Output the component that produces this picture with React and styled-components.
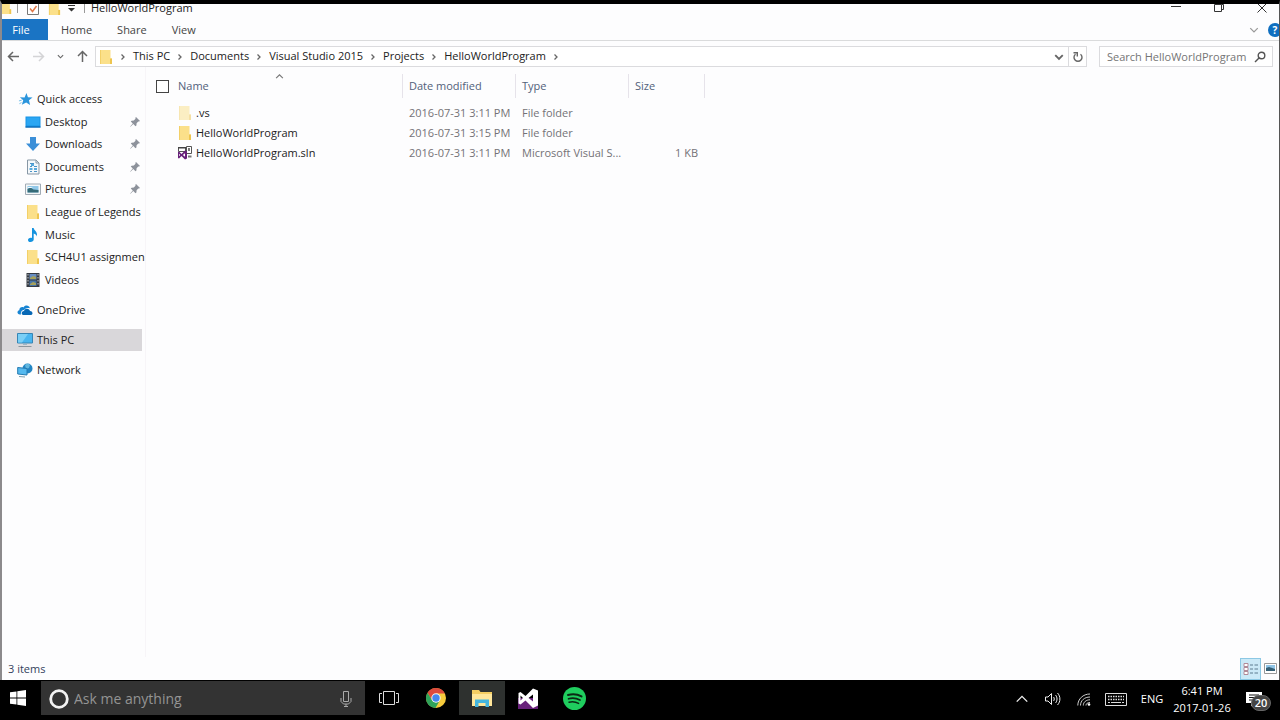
import React from 'react'
import styled, { createGlobalStyle } from 'styled-components'

const GlobalStyle = createGlobalStyle`
    * {
        box-sizing: border-box;
    }
    body {
        margin: 0;
        background: #000;
        font-family: "Open Sans", "Noto Sans", sans-serif;
        font-size: 11px;
        line-height: 16px;
        color: #222;
    }
    button, input {
        font: inherit;
        color: inherit;
        border: 0;
        padding: 0;
        background: none;
        border-radius: 0;
        outline: none;
    }
    a {
        color: inherit;
        text-decoration: none;
    }
    svg {
        display: block;
        flex: none;
    }
`

const Desktop = styled.div`
    min-height: 100vh;
    display: flex;
    flex-direction: column;
`

const Window = styled.div`
    flex: 1;
    display: flex;
    flex-direction: column;
    background: #fdfdfe;
    border-top: 4px solid #000;
    border-left: 2px solid #8c8a8c;
    border-right: 1px solid #555;
`

const TitleBar = styled.header`
    height: 15px;
    overflow: hidden;
    display: flex;
    justify-content: space-between;
    align-items: flex-start;
`

const TitleGroup = styled.div`
    height: 8px;
    display: flex;
    align-items: center;
`

const QuickButton = styled.button`
    width: ${props => props.$width || 14}px;
    display: flex;
    justify-content: center;
`

const TitleDivider = styled.span`
    width: 1px;
    height: 10px;
    margin: 0 6px 0 8px;
    background: #999;
`

const Title = styled.h1`
    margin: 0;
    font-size: 11px;
    line-height: 8px;
    font-weight: normal;
`

const WindowButton = styled.button`
    width: 43px;
    display: flex;
    justify-content: center;
`

const WindowButtons = styled(TitleGroup)`
    margin-right: -4px;
`

const Ribbon = styled.nav`
    height: 22px;
    display: flex;
    align-items: center;
    border-bottom: 1px solid #dadbdc;
`

const FileTab = styled.button`
    width: 46px;
    height: 21px;
    margin-right: 1px;
    padding-right: 8px;
    background: #1a74c4;
    color: #fff;
`

const Tab = styled.button`
    height: 21px;
    padding: 0 12px;
    margin-right: 1px;
    color: #444;
`

const RibbonEnd = styled.div`
    margin-left: auto;
    display: flex;
    align-items: center;
    gap: 9px;
    overflow: hidden;
`

const HelpButton = styled.button`
    width: 14px;
    height: 14px;
    margin-right: -3px;
    border-radius: 50%;
    background: #0f6fc0;
    color: #fff;
    font-size: 10px;
    font-weight: bold;
    line-height: 14px;
`

const AddressRow = styled.div`
    display: flex;
    padding: 5px 6px 0 0;
`

const NavButtons = styled.div`
    width: 93px;
    display: flex;
    align-items: center;
    justify-content: space-between;
    padding: 0 6px 0 5px;
`

const NavButton = styled.button`
    display: flex;
`

const AddressBar = styled.nav`
    flex: 1;
    height: 21px;
    display: flex;
    align-items: center;
    border: 1px solid #dbdbde;
    padding-left: 3px;
    background: #fff;
`

const Crumb = styled.a`
    padding-bottom: 2px;
    white-space: nowrap;
`

const CrumbArrow = styled.span`
    width: 20px;
    display: flex;
    justify-content: center;
`

const AddressButton = styled.button`
    width: 18px;
    height: 19px;
    display: flex;
    align-items: center;
    justify-content: center;
    border-left: ${props => (props.$line ? '1px solid #dbdbde' : '0')};
    margin-left: ${props => (props.$push ? 'auto' : '0')};
`

const SearchBox = styled.label`
    width: 174px;
    height: 21px;
    margin-left: 12px;
    display: flex;
    align-items: center;
    border: 1px solid #dbdbde;
    padding: 0 6px 0 7px;
    background: #fff;
`

const SearchInput = styled.input`
    flex: 1;
    min-width: 0;
    &::placeholder {
        color: #757575;
        opacity: 1;
    }
`

const Body = styled.div`
    flex: 1;
    display: flex;
`

const Sidebar = styled.nav`
    width: 144px;
    padding-top: 21px;
    border-right: 1px solid #f7f5f8;
`

const PlaceList = styled.ul`
    list-style: none;
    margin: 0;
    padding: 0;
    height: 203px;
    display: grid;
    grid-auto-rows: 1fr;
`

const RootList = styled.ul`
    list-style: none;
    margin: 0;
    padding: 8px 0 0;
    display: grid;
    grid-auto-rows: 22px;
    gap: 8px;
`

const Place = styled.a`
    height: 100%;
    width: 140px;
    display: flex;
    align-items: center;
    gap: 4px;
    padding-left: ${props => (props.$nested ? 23 : 15)}px;
    padding-right: 2px;
    background: ${props => (props.$active ? '#d9d7da' : 'transparent')};
    white-space: nowrap;
`

const PlaceName = styled.span`
    flex: 1;
`

const Main = styled.main`
    flex: 1;
    padding: 7px 0 0 4px;
`

const FileTable = styled.table`
    width: 555px;
    table-layout: fixed;
    border-collapse: collapse;
`

const HeadCell = styled.th`
    padding: 0 0 5px;
    text-align: left;
    font-weight: normal;
    color: #52617a;
`

const HeadInner = styled.div`
    position: relative;
    height: 24px;
    display: flex;
    align-items: center;
    padding-left: ${props => (props.$flush ? 0 : 6)}px;
    border-right: ${props => (props.$noLine ? '0' : '1px solid #e6e3ea')};
`

const SortMark = styled.span`
    position: absolute;
    top: -2px;
    left: 97px;
`

const Check = styled.input`
    appearance: none;
    width: 13px;
    height: 13px;
    margin: 0 0 0 6px;
    border: 1px solid #444;
    background: #fff;
`

const Cell = styled.td`
    height: 20px;
    padding: 0 0 0 6px;
    color: #747276;
    white-space: nowrap;
`

const SizeCell = styled(Cell)`
    padding-right: 7px;
    text-align: right;
`

const NameCell = styled(Cell)`
    padding: 0;
    color: #222;
`

const FileLink = styled.a`
    display: flex;
    align-items: center;
    gap: 4px;
`

const StatusBar = styled.footer`
    height: 23px;
    display: flex;
    align-items: center;
    justify-content: space-between;
    padding-left: 6px;
    color: #33415c;
`

const ViewButtons = styled.div`
    display: flex;
    align-items: center;
`

const ViewButton = styled.button`
    width: ${props => (props.$active ? 21 : 18)}px;
    height: 22px;
    display: flex;
    align-items: center;
    justify-content: center;
    border: 1px solid ${props => (props.$active ? '#8cc8e4' : 'transparent')};
    background: ${props => (props.$active ? '#cbe9f7' : 'transparent')};
`

const Taskbar = styled.footer`
    height: 40px;
    padding: 1px 0 5px;
    display: flex;
    background: #000;
    color: #fff;
`

const StartButton = styled.button`
    width: 41px;
    display: flex;
    align-items: center;
    padding-left: 10px;
`

const Cortana = styled.label`
    width: 324px;
    display: flex;
    align-items: center;
    gap: 5px;
    padding: 2px 13px 0 8px;
    background: #333;
`

const CortanaInput = styled.input`
    flex: 1;
    min-width: 0;
    font-size: 14px;
    line-height: 20px;
    &::placeholder {
        color: #949494;
        opacity: 1;
    }
`

const TaskButton = styled.button`
    width: ${props => props.$width || 46}px;
    display: flex;
    align-items: center;
    justify-content: center;
    background: ${props => (props.$active ? '#2e312f' : 'transparent')};
`

const Tray = styled.div`
    margin-left: auto;
    display: flex;
    align-items: center;
    padding: 2px 9px 0 0;
`

const TrayButton = styled.button`
    width: ${props => props.$width || 31}px;
    display: flex;
    justify-content: center;
`

const Clock = styled.button`
    width: 62px;
    font-size: 11px;
    line-height: 17px;
    white-space: nowrap;
`

const Notifications = styled.button`
    position: relative;
    width: 38px;
    padding-left: 13px;
`

const Badge = styled.span`
    position: absolute;
    top: 4px;
    left: 18px;
    width: 20px;
    height: 16px;
    border-radius: 8px;
    background: #444;
    border: 1px solid #666;
    font-size: 11px;
    font-weight: 600;
    line-height: 14px;
`

const Folder = ({ pale, size = 14 }) => (
    <svg width={size} height={size + 2} viewBox="0 0 14 16" opacity={pale ? 0.5 : 1}>
        <path d="M1 1h10.5v8.500H13V15H1z" fill="#fbe08a" />
        <path d="M11 9.500h2V15h-2z" fill="#eec54f" />
        <path d="M1 1h1v14H1z" fill="#f3d068" />
    </svg>
)

const Arrow = ({ dir, color = '#666' }) => (
    <svg width="13" height="13" viewBox="0 0 13 13" fill="none" stroke={color} strokeWidth="1.500">
        {dir === 'left' && <path d="M12 6.500H1.500M6 2L1.500 6.500 6 11" />}
        {dir === 'right' && <path d="M1 6.500h10.500M7 2l4.500 4.500L7 11" />}
        {dir === 'up' && <path d="M6.500 12V1.500M2 6l4.500-4.500L11 6" />}
    </svg>
)

const Chevron = ({ dir = 'down', size = 8, color = '#666', weight = 1.3 }) => {
    const paths = {
        down: 'M1 2.500l3 3 3-3',
        up: 'M1 5.500l3-3 3 3',
        right: 'M2.500 1.500L5 4 2.500 6.500',
    }
    return (
        <svg width={size} height={size} viewBox="0 0 8 8" fill="none" stroke={color} strokeWidth={weight}>
            <path d={paths[dir]} />
        </svg>
    )
}

const Pin = () => (
    <svg width="10" height="10" viewBox="0 0 10 10">
        <path d="M6 0l4 4-1 .6-.7-.1L6.600 6.200 6.400 8.500 5.500 9.200 3.300 7 .5 9.800.2 9.500 2.800 6.500.8 4.500l.8-.8 2.200-.2L5.500 1.700 5.400.8z" fill="#8d929b" />
    </svg>
)

const placeIcons = {
    star: (
        <svg width="15" height="15" viewBox="0 0 16 16">
            <path d="M9 1l1.600 4.500 4.900.3-3.800 3 1.200 5-4.200-2.700-4.600 2.500 1.500-4.800L2 5.700l5 .1z" fill="#2b95dc" />
            <path d="M1 9.500l3-.8M1.500 12.500l2.200-1.200" stroke="#70bdea" strokeWidth="1" />
        </svg>
    ),
    desktop: (
        <svg width="16" height="16" viewBox="0 0 16 16">
            <path d="M.5 2.500h15v11H.5z" fill="#1793e6" />
            <path d="M1.500 3.500h13v8h-13z" fill="#2ba6f3" />
            <path d="M.5 12.500h15v1H.5z" fill="#0a5da6" />
        </svg>
    ),
    download: (
        <svg width="16" height="16" viewBox="0 0 16 16">
            <path d="M5 1h6v6.500h4L8 15 1 7.500h4z" fill="#3b8fd8" />
        </svg>
    ),
    document: (
        <svg width="16" height="16" viewBox="0 0 16 16">
            <path d="M2.500 1h8.500l3 3v11H2.500z" fill="#f4f8fb" stroke="#8797a5" />
            <path d="M11 1v3h3" fill="none" stroke="#8797a5" />
            <path d="M5 4.500h4M5 7.500h2M9 7.500h3M5 12.500h2M9 12.500h3" stroke="#4b93c6" />
            <path d="M4.500 9h3v2h-3zM9 9h3v2H9zM6 5h3v2H6z" fill="#59aadd" />
        </svg>
    ),
    picture: (
        <svg width="16" height="16" viewBox="0 0 16 16">
            <path d="M.5 3h15v10.500H.5z" fill="#f5f7f8" stroke="#a0abb5" />
            <path d="M2.500 5h11v6.500h-11z" fill="#91c8e9" />
            <path d="M2.500 8l3-1.500 3 2 5 .5v2.500h-11z" fill="#356b78" />
            <path d="M3 6h3l2 1H3z" fill="#eef7fc" />
        </svg>
    ),
    folder: <Folder />,
    music: (
        <svg width="16" height="16" viewBox="0 0 16 16">
            <path d="M7 1h1.700c.2 2.600 4.300 3.500 3.200 8.500-.6-1.800-1.700-2.600-3.200-3v6c0 1.500-1.500 2.500-3.200 2.500S3 14.100 3 12.900s1.200-2.200 2.700-2.200c.5 0 1 .1 1.300.3z" fill="#1593df" />
        </svg>
    ),
    video: (
        <svg width="16" height="16" viewBox="0 0 16 16">
            <path d="M1.500 1h13v14h-13z" fill="#353a42" />
            <path d="M4.500 2h7v5.500h-7z" fill="#668dc2" />
            <path d="M4.500 8.500h7V14h-7z" fill="#4774a8" />
            <path d="M5 6l3-2 3 1v2H5zM5 12l3-2 3 1v2H5z" fill="#a6a15b" />
            <path d="M3 2v12M13 2v12" stroke="#c3c6ca" strokeWidth="1" strokeDasharray="1.500 1.500" />
        </svg>
    ),
    onedrive: (
        <svg width="16" height="16" viewBox="0 0 16 16">
            <path d="M4 12.500H3C-.3 12.500-.2 8.600 2.300 8.200 2.300 5.500 5 4.500 6.500 5.500 8 2.500 12.500 3.200 12.800 6.200 9 5 7 8 7 8c-2.500 0-3.600 2.700-3 4.500z" fill="#1684d3" />
            <path d="M6.800 13C4 13 4 9.300 7 9c.8-3 5-3 6 0 3.300.2 3.200 4 .5 4z" fill="#0868b5" />
        </svg>
    ),
    pc: (
        <svg width="16" height="16" viewBox="0 0 16 16">
            <path d="M.5 1.500h15v9.500H.5z" fill="#49b5ef" stroke="#3785b4" />
            <path d="M1 2h10L5 10.500H1z" fill="#7acff6" />
            <path d="M1.500 14.500h13" stroke="#8d969d" />
            <path d="M6 12h4v1H6z" fill="#a0b7c6" />
        </svg>
    ),
    network: (
        <svg width="16" height="16" viewBox="0 0 16 16">
            <circle cx="10.500" cy="6.500" r="5" fill="#2285c4" />
            <path d="M8 3c2-2 4-1 5 0l-1 3-3 1z" fill="#62b7df" />
            <path d="M.7 5.500l9.300 1V13l-9.300-1z" fill="#54b9ef" stroke="#247ab1" />
            <path d="M2 14.500l6 .5" stroke="#7e9fae" />
        </svg>
    ),
}

const SolutionIcon = () => (
    <svg width="14" height="14" viewBox="0 0 14 14">
        <path d="M.5 1.500h7v4h-7z" fill="#fff" stroke="#555" />
        <path d="M0 1h8v1.500H0z" fill="#444" />
        <path d="M8.500.5h5v7h-5z" fill="#fff" stroke="#555" />
        <path d="M10 2h2v3h-2z" fill="#777" />
        <path d="M0 6l1-.5L3.500 8 7 4.500l2 1v7L7 13.500 3.500 10 1 12.500 0 12zM7 7.300L4.800 9 7 10.800zM1 7.700v2.600L2.200 9z" fill="#68217a" fillRule="evenodd" />
        <path d="M10 9.500h3.500v2H10z" fill="#777" />
    </svg>
)

const trail = ['This PC', 'Documents', 'Visual Studio 2015', 'Projects', 'HelloWorldProgram']

const places = [
    { name: 'Quick access', icon: 'star', root: true },
    { name: 'Desktop', icon: 'desktop', pinned: true },
    { name: 'Downloads', icon: 'download', pinned: true },
    { name: 'Documents', icon: 'document', pinned: true },
    { name: 'Pictures', icon: 'picture', pinned: true },
    { name: 'League of Legends', icon: 'folder' },
    { name: 'Music', icon: 'music' },
    { name: 'SCH4U1 assignmen', icon: 'folder' },
    { name: 'Videos', icon: 'video' },
]

const roots = [
    { name: 'OneDrive', icon: 'onedrive' },
    { name: 'This PC', icon: 'pc', active: true },
    { name: 'Network', icon: 'network' },
]

const files = [
    { name: '.vs', date: '2016-07-31 3:11 PM', type: 'File folder', icon: <Folder pale /> },
    { name: 'HelloWorldProgram', date: '2016-07-31 3:15 PM', type: 'File folder', icon: <Folder /> },
    { name: 'HelloWorldProgram.sln', date: '2016-07-31 3:11 PM', type: 'Microsoft Visual S...', size: '1 KB', icon: <SolutionIcon /> },
]

const IconSlot = styled.span`
    flex: none;
    width: ${props => props.$width || 16}px;
    display: flex;
    justify-content: center;
`

const Explorer = () => {
    return (
        <Window>
            <TitleBar>
                <TitleGroup>
                    <QuickButton $width={7} aria-label="Window menu"><Folder size={12} /></QuickButton>
                    <TitleDivider />
                    <QuickButton $width={18} aria-label="Properties">
                        <svg width="12" height="13" viewBox="0 0 12 13" fill="none">
                            <path d="M.5.500h11v12H.5z" fill="#fff" stroke="#777" />
                            <path d="M3 6.500l2.500 3L9.500 4" stroke="#e07848" strokeWidth="1.500" />
                        </svg>
                    </QuickButton>
                    <QuickButton $width={24} aria-label="New folder"><Folder size={13} /></QuickButton>
                    <QuickButton $width={10} aria-label="Customize">
                        <svg width="7" height="7" viewBox="0 0 7 7" fill="#333">
                            <path d="M0 0h7v1H0zM0 3h7L3.500 6.500z" />
                        </svg>
                    </QuickButton>
                    <TitleDivider />
                    <Title>HelloWorldProgram</Title>
                </TitleGroup>
                <WindowButtons>
                    <WindowButton aria-label="Minimize">
                        <svg width="10" height="10" viewBox="0 0 10 10" stroke="#333"><path d="M0 3.500h10" /></svg>
                    </WindowButton>
                    <WindowButton aria-label="Restore">
                        <svg width="10" height="10" viewBox="0 0 10 10" fill="none" stroke="#333">
                            <path d="M.5 1.500h7v7h-7zM7.500 1.500h2v5h-2" />
                        </svg>
                    </WindowButton>
                    <WindowButton aria-label="Close">
                        <svg width="10" height="10" viewBox="0 0 10 10" stroke="#333"><path d="M.5.500l9 9M9.500.500l-9 9" /></svg>
                    </WindowButton>
                </WindowButtons>
            </TitleBar>
            <Ribbon>
                <FileTab>File</FileTab>
                <Tab>Home</Tab>
                <Tab>Share</Tab>
                <Tab>View</Tab>
                <RibbonEnd>
                    <button aria-label="Expand the ribbon"><Chevron size={10} color="#999" weight={1} /></button>
                    <HelpButton>?</HelpButton>
                </RibbonEnd>
            </Ribbon>
            <AddressRow>
                <NavButtons>
                    <NavButton aria-label="Back"><Arrow dir="left" /></NavButton>
                    <NavButton aria-label="Forward"><Arrow dir="right" color="#d4d4d6" /></NavButton>
                    <NavButton aria-label="Recent locations"><Chevron size={7} /></NavButton>
                    <NavButton aria-label="Up"><Arrow dir="up" /></NavButton>
                </NavButtons>
                <AddressBar aria-label="Address">
                    <Folder />
                    <CrumbArrow><Chevron dir="right" /></CrumbArrow>
                    {trail.map(step => (
                        <React.Fragment key={step}>
                            <Crumb href="#">{step}</Crumb>
                            <CrumbArrow><Chevron dir="right" /></CrumbArrow>
                        </React.Fragment>
                    ))}
                    <AddressButton $push aria-label="Previous locations"><Chevron size={10} weight={1.5} /></AddressButton>
                    <AddressButton $line aria-label="Refresh">
                        <svg width="12" height="12" viewBox="0 0 12 12" fill="none" stroke="#666" strokeWidth="1.400">
                            <path d="M8.500 3.200A4 4 0 1 1 3.500 3.200M1.500 1.700h3.800v3.800" />
                        </svg>
                    </AddressButton>
                </AddressBar>
                <SearchBox>
                    <SearchInput type="text" aria-label="Search" placeholder="Search HelloWorldProgram" />
                    <svg width="12" height="12" viewBox="0 0 12 12" fill="none" stroke="#555" strokeWidth="1.400">
                        <circle cx="7.500" cy="4.500" r="3.300" />
                        <path d="M5 7L1 11" />
                    </svg>
                </SearchBox>
            </AddressRow>
            <Body>
                <Sidebar>
                    <PlaceList>
                        {places.map(place => (
                            <li key={place.name}>
                                <Place href="#" $nested={!place.root}>
                                    <IconSlot>{placeIcons[place.icon]}</IconSlot>
                                    <PlaceName>{place.name}</PlaceName>
                                    {place.pinned && <Pin />}
                                </Place>
                            </li>
                        ))}
                    </PlaceList>
                    <RootList>
                        {roots.map(place => (
                            <li key={place.name}>
                                <Place href="#" $active={place.active}>
                                    <IconSlot>{placeIcons[place.icon]}</IconSlot>
                                    <PlaceName>{place.name}</PlaceName>
                                </Place>
                            </li>
                        ))}
                    </RootList>
                </Sidebar>
                <Main>
                    <FileTable>
                        <colgroup>
                            <col width="28" />
                            <col width="225" />
                            <col width="113" />
                            <col width="113" />
                            <col width="76" />
                        </colgroup>
                        <thead>
                            <tr>
                                <HeadCell>
                                    <HeadInner $flush $noLine><Check type="checkbox" aria-label="Select all" /></HeadInner>
                                </HeadCell>
                                <HeadCell>
                                    <HeadInner $flush>
                                        Name
                                        <SortMark><Chevron dir="up" size={9} color="#777" weight={1} /></SortMark>
                                    </HeadInner>
                                </HeadCell>
                                <HeadCell><HeadInner>Date modified</HeadInner></HeadCell>
                                <HeadCell><HeadInner>Type</HeadInner></HeadCell>
                                <HeadCell><HeadInner>Size</HeadInner></HeadCell>
                            </tr>
                        </thead>
                        <tbody>
                            {files.map(file => (
                                <tr key={file.name}>
                                    <Cell />
                                    <NameCell>
                                        <FileLink href="#">
                                            <IconSlot $width={14}>{file.icon}</IconSlot>
                                            {file.name}
                                        </FileLink>
                                    </NameCell>
                                    <Cell>{file.date}</Cell>
                                    <Cell>{file.type}</Cell>
                                    <SizeCell>{file.size}</SizeCell>
                                </tr>
                            ))}
                        </tbody>
                    </FileTable>
                </Main>
            </Body>
            <StatusBar>
                <span>3 items</span>
                <ViewButtons>
                    <ViewButton $active aria-label="Details view">
                        <svg width="16" height="14" viewBox="0 0 16 14" fill="none">
                            <path d="M1 1.500h4v3H1zM1 5.500h4v3H1zM1 9.500h4v3H1z" fill="#fff" stroke="#b18a98" />
                            <path d="M7 3h3M11.500 3H15M7 7h3M11.500 7H15M7 11h3M11.500 11H15" stroke="#5d7d90" />
                        </svg>
                    </ViewButton>
                    <ViewButton aria-label="Thumbnail view">
                        <svg width="13" height="11" viewBox="0 0 13 11">
                            <path d="M.5.500h12v10H.5z" fill="#fff" stroke="#999" />
                            <path d="M2 2h9v6H2z" fill="#8fc4e6" />
                            <path d="M2 5l3-1 6 2v2H2z" fill="#345f75" />
                        </svg>
                    </ViewButton>
                </ViewButtons>
            </StatusBar>
        </Window>
    )
}

const App = () => {
    return (
        <Desktop>
            <GlobalStyle />
            <Explorer />
            <Taskbar>
                <StartButton aria-label="Start">
                    <svg width="16" height="16" viewBox="0 0 16 16" fill="#fff">
                        <path d="M0 2.300l6.500-.9v6.200H0zM7.300 1.300L16 0v7.600H7.300zM0 8.400h6.500v6.200L0 13.700zM7.300 8.400H16V16l-8.700-1.300z" />
                    </svg>
                </StartButton>
                <Cortana>
                    <svg width="20" height="20" viewBox="0 0 20 20" fill="none">
                        <circle cx="10" cy="10" r="8.300" stroke="#f2f2f2" strokeWidth="2.800" />
                    </svg>
                    <CortanaInput type="text" aria-label="Ask Cortana" placeholder="Ask me anything" />
                    <svg width="12" height="16" viewBox="0 0 12 16" fill="none" stroke="#aaa">
                        <path d="M3.500.500h5v10h-5zM1 7v3.500L3.500 13h5L11 10.500V7M6 13v2.500M4 15.500h4" />
                    </svg>
                </Cortana>
                <TaskButton $width={48} aria-label="Task view">
                    <svg width="20" height="14" viewBox="0 0 20 14" fill="none" stroke="#ddd">
                        <path d="M4.500.500h11v13h-11zM3 2.500H.5v9H3M17 2.500h2.500v9H17" />
                    </svg>
                </TaskButton>
                <TaskButton aria-label="Chrome">
                    <svg width="20" height="20" viewBox="0 0 20 20">
                        <circle cx="10" cy="10" r="10" fill="#f7cb3c" />
                        <path d="M10 5.500h8.900A10 10 0 0 0 1.500 4.700L6.100 12.300 10 10z" fill="#dc4a3d" />
                        <path d="M1.500 4.700A10 10 0 0 0 9.500 20l4.400-7.700-3.900 2-3.900-2z" fill="#2fa35a" />
                        <circle cx="10" cy="10" r="4.700" fill="#f5f5f5" />
                        <circle cx="10" cy="10" r="3.700" fill="#4387ef" />
                    </svg>
                </TaskButton>
                <TaskButton $active aria-label="File Explorer">
                    <svg width="20" height="18" viewBox="0 0 20 18">
                        <path d="M0 1h7l1.500 2H20v14H0z" fill="#f4cd62" />
                        <path d="M0 5h20v12H0z" fill="#ffe69a" />
                        <path d="M3 10.500h14V18h-3.500v-4h-7v4H3z" fill="#45b5dd" />
                    </svg>
                </TaskButton>
                <TaskButton aria-label="Visual Studio">
                    <svg width="22" height="22" viewBox="0 0 22 22">
                        <path d="M1 11h20v11H1z" fill="#68217a" />
                        <path d="M1.500 6l2-1 5 4L16 1.500l5 2v15L16 21l-7.500-7.500-5 4-2-1zM16 7.500L11.500 11l4.500 3.500zM3.500 8.500v5L6 11z" fill="#fff" fillRule="evenodd" />
                    </svg>
                </TaskButton>
                <TaskButton aria-label="Spotify">
                    <svg width="23" height="23" viewBox="0 0 23 23" fill="none" stroke="#0b2814" strokeLinecap="round">
                        <circle cx="11.500" cy="11.500" r="11.500" fill="#1fcd5e" stroke="none" />
                        <path d="M5 8c4.500-1.300 9.500-.8 13.500 1.400" strokeWidth="2" />
                        <path d="M5.500 11.800c4-1.100 8-.6 11.500 1.300" strokeWidth="1.700" />
                        <path d="M6 15.200c3.400-.8 6.800-.4 9.600 1.200" strokeWidth="1.400" />
                    </svg>
                </TaskButton>
                <Tray>
                    <TrayButton aria-label="Show hidden icons"><Chevron dir="up" size={14} color="#eee" weight={0.8} /></TrayButton>
                    <TrayButton aria-label="Volume">
                        <svg width="16" height="14" viewBox="0 0 16 14" fill="none" stroke="#eee">
                            <path d="M.5 5H3l3.500-3.500v11L3 9H.5zM8.500 5c1 1 1 3 0 4M10.500 3c2 2.200 2 5.800 0 8M12.500 1c3.200 3.400 3.200 8.600 0 12" />
                        </svg>
                    </TrayButton>
                    <TrayButton aria-label="Wi-Fi">
                        <svg width="14" height="14" viewBox="0 0 14 14" fill="none" stroke="#ccc">
                            <path d="M.8 13.500C.8 7 6 2 13 2M3.500 13.500C3.500 8.500 7.500 5 13 5M6.300 13.500c0-3.500 3-5.700 6.700-5.700M9 13.500c0-2 1.700-3 4-3" />
                            <circle cx="12" cy="12.500" r="1.300" fill="#fff" stroke="none" />
                        </svg>
                    </TrayButton>
                    <TrayButton $width={34} aria-label="Touch keyboard">
                        <svg width="22" height="13" viewBox="0 0 22 13" fill="none" stroke="#ddd">
                            <path d="M.5.500h21v12H.5z" />
                            <path d="M3 3.500h16M3 6.500h16" strokeWidth="1.500" strokeDasharray="1.500 1" />
                            <path d="M3 9.500h2M6 9.500h10M17 9.500h2" />
                        </svg>
                    </TrayButton>
                    <TrayButton $width={38}>ENG</TrayButton>
                    <Clock>6:41 PM<br />2017-01-26</Clock>
                    <Notifications aria-label="Notifications">
                        <svg width="16" height="16" viewBox="0 0 16 16">
                            <path d="M0 1h16v11H8l-3 3.500V12H0z" fill="#fff" />
                            <path d="M3 4h10M3 6.500h10M3 9h7" stroke="#111" />
                        </svg>
                        <Badge>20</Badge>
                    </Notifications>
                </Tray>
            </Taskbar>
        </Desktop>
    )
}

export default App
